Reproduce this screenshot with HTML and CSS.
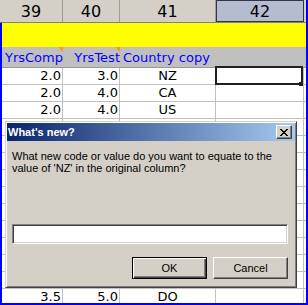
FILE: index.html
```html
<!DOCTYPE html>
<html>
<head>
<meta charset="utf-8">
<link rel="stylesheet" href="styles.css">
</head>
<body>
<div class="sheet">
  <div class="colheads">
    <div class="colhead">39</div>
    <div class="colhead">40</div>
    <div class="colhead">41</div>
    <div class="colhead sel">42</div>
    <div class="colhead filler"></div>
  </div>
  <div class="frame">
    <div class="row yellow"></div>
    <div class="row fields">
      <div class="field num mark">YrsComp</div>
      <div class="field num mark">YrsTest</div>
      <div class="field text">Country copy</div>
      <div class="field"></div>
      <div class="field"></div>
    </div>
    <div class="row data"><div class="cell num">2.0</div><div class="cell num">3.0</div><div class="cell ctr">NZ</div><div class="cell active"></div><div class="cell"></div></div>
    <div class="row data"><div class="cell num">2.0</div><div class="cell num">4.0</div><div class="cell ctr">CA</div><div class="cell"></div><div class="cell"></div></div>
    <div class="row data"><div class="cell num">2.0</div><div class="cell num">4.0</div><div class="cell ctr">US</div><div class="cell"></div><div class="cell"></div></div>
    <div class="row data"><div class="cell num"></div><div class="cell num"></div><div class="cell ctr"></div><div class="cell"></div><div class="cell"></div></div>
    <div class="row data"><div class="cell num"></div><div class="cell num"></div><div class="cell ctr"></div><div class="cell"></div><div class="cell"></div></div>
    <div class="row data"><div class="cell num"></div><div class="cell num"></div><div class="cell ctr"></div><div class="cell"></div><div class="cell"></div></div>
    <div class="row data"><div class="cell num"></div><div class="cell num"></div><div class="cell ctr"></div><div class="cell"></div><div class="cell"></div></div>
    <div class="row data"><div class="cell num"></div><div class="cell num"></div><div class="cell ctr"></div><div class="cell"></div><div class="cell"></div></div>
    <div class="row data"><div class="cell num"></div><div class="cell num"></div><div class="cell ctr"></div><div class="cell"></div><div class="cell"></div></div>
    <div class="row data"><div class="cell num"></div><div class="cell num"></div><div class="cell ctr"></div><div class="cell"></div><div class="cell"></div></div>
    <div class="row data"><div class="cell num"></div><div class="cell num"></div><div class="cell ctr"></div><div class="cell"></div><div class="cell"></div></div>
    <div class="row data"><div class="cell num"></div><div class="cell num"></div><div class="cell ctr"></div><div class="cell"></div><div class="cell"></div></div>
    <div class="row data"><div class="cell num"></div><div class="cell num"></div><div class="cell ctr"></div><div class="cell"></div><div class="cell"></div></div>
    <div class="row data"><div class="cell num">3.5</div><div class="cell num">5.0</div><div class="cell ctr">DO</div><div class="cell"></div><div class="cell"></div></div>
  </div>

  <div class="dialog">
    <div class="titlebar">
      <span class="title">What's new?</span>
      <span class="close">
        <svg width="8" height="7" viewBox="0 0 8 7" shape-rendering="crispEdges">
          <rect x="0" y="0" width="2" height="1" fill="#000"/>
          <rect x="6" y="0" width="2" height="1" fill="#000"/>
          <rect x="1" y="1" width="2" height="1" fill="#000"/>
          <rect x="5" y="1" width="2" height="1" fill="#000"/>
          <rect x="2" y="2" width="4" height="1" fill="#000"/>
          <rect x="3" y="3" width="2" height="1" fill="#000"/>
          <rect x="2" y="4" width="4" height="1" fill="#000"/>
          <rect x="1" y="5" width="2" height="1" fill="#000"/>
          <rect x="5" y="5" width="2" height="1" fill="#000"/>
          <rect x="0" y="6" width="2" height="1" fill="#000"/>
          <rect x="6" y="6" width="2" height="1" fill="#000"/>
        </svg>
      </span>
    </div>
    <p class="msg">What new code or value do you want to equate to the value of 'NZ' in the original column?</p>
    <div class="input"></div>
    <div class="buttons">
      <div class="btn default">OK</div>
      <div class="btn">Cancel</div>
    </div>
  </div>
</div>
</body>
</html>
```

FILE: styles.css
```css
* { box-sizing: border-box; }

body {
  margin: 0;
  font-family: "DejaVu Sans", sans-serif;
  background: #fff;
}

.sheet {
  position: relative;
  width: 308px;
  height: 305px;
  border-right: 2px solid #0000ff;
  overflow: hidden;
  background: #fff;
}

.colheads {
  display: grid;
  grid-template-columns: 63px 57px 96px 88px 1fr;
  height: 23px;
  border-bottom: 1px solid #808080;
  background: #d4d0c8;
}

.colhead {
  font-size: 16px;
  line-height: 19px;
  padding-top: 2px;
  text-align: center;
  color: #000;
  border-right: 1px solid #a09c94;
}

.colhead.sel {
  background: #b6bcd0;
  border: 1px solid #34364a;
  padding-top: 1px;
}

.colhead.filler { border-right: 0; }

.frame {
  height: 282px;
  border-left: 2px solid #0000ff;
  border-bottom: 2px solid #0000ff;
  overflow: hidden;
}

.row {
  display: grid;
  grid-template-columns: 61px 57px 96px 88px 1fr;
}

.yellow {
  height: 24px;
  background: #ffff00;
}

.fields {
  height: 21px;
  background: #c0c0c0;
  border-bottom: 1px solid #9a9a9a;
}

.field {
  font-size: 13px;
  line-height: 18px;
  padding-top: 2px;
  color: #0000ff;
  white-space: nowrap;
  position: relative;
}

.field.num { text-align: right; padding-right: 0; }
.field.text { padding-left: 3px; }

.field.mark::after {
  content: "";
  position: absolute;
  right: 0;
  top: 0;
  border-style: solid;
  border-width: 0 5px 5px 0;
  border-color: transparent #f0a020 transparent transparent;
}

.data { height: 17px; }

.cell {
  font-size: 13px;
  line-height: 16px;
  color: #000;
  border-right: 1px solid #c0c0c0;
  border-bottom: 1px solid #c0c0c0;
  white-space: nowrap;
}

.cell:last-child { border-right: 0; }

.cell.num { text-align: right; padding-right: 1px; }
.cell.ctr { text-align: center; }

.cell.active { position: relative; }

.cell.active::before {
  content: "";
  position: absolute;
  left: -1px;
  top: -2px;
  right: 0;
  bottom: -1px;
  border: 2px solid #202020;
}

.cell.active::after {
  content: "";
  position: absolute;
  right: 0;
  bottom: -2px;
  width: 4px;
  height: 4px;
  background: #202020;
}

.dialog {
  position: absolute;
  left: 5px;
  top: 121px;
  width: 292px;
  height: 167px;
  padding: 1px;
  background: #d4d0c8;
  border: 1px solid;
  border-color: #d4d0c8 #404040 #404040 #d4d0c8;
  box-shadow: inset 1px 1px #ffffff, inset -1px -1px #808080;
  font-family: "Liberation Sans", Arial, sans-serif;
  font-size: 11px;
  color: #000;
  display: flex;
  flex-direction: column;
}

.titlebar {
  height: 18px;
  background: linear-gradient(to right, #0a246a, #a6caf0);
  display: flex;
  align-items: center;
  justify-content: space-between;
  padding: 0 3px 0 1px;
  color: #fff;
  font-weight: bold;
  font-size: 11px;
}

.close {
  width: 16px;
  height: 14px;
  background: #d4d0c8;
  border: 1px solid;
  border-color: #ffffff #404040 #404040 #ffffff;
  box-shadow: inset -1px -1px #808080;
  display: flex;
  align-items: center;
  justify-content: center;
  padding-right: 1px;
}

.close svg { display: block; }

.msg {
  margin: 9px 0 0 5px;
  width: 280px;
  line-height: 12px;
}

.input {
  margin: 50px 7px 0 5px;
  height: 20px;
  background: #fff;
  border: 1px solid;
  border-color: #808080 #ffffff #ffffff #808080;
  box-shadow: inset 1px 1px #404040, inset -1px -1px #d4d0c8;
}

.buttons {
  display: flex;
  justify-content: flex-end;
  gap: 6px;
  margin-top: 13px;
  padding-right: 7px;
}

.btn {
  width: 75px;
  height: 22px;
  display: flex;
  align-items: center;
  justify-content: center;
  background: #d4d0c8;
  border: 1px solid;
  border-color: #ffffff #404040 #404040 #ffffff;
  box-shadow: inset -1px -1px #808080;
}

.btn.default {
  border: 1px solid #000;
  box-shadow: inset 1px 1px #ffffff, inset -1px -1px #404040, inset -2px -2px #808080;
}
```
